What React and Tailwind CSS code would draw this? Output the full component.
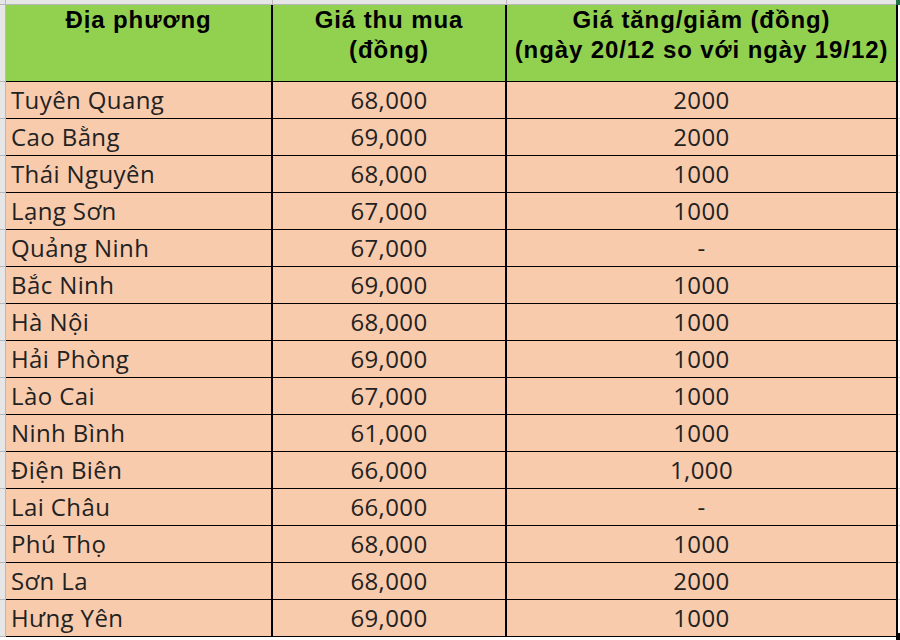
import React from "react";

const rows = [
    ["Tuyên Quang", "68,000", "2000"],
    ["Cao Bằng", "69,000", "2000"],
    ["Thái Nguyên", "68,000", "1000"],
    ["Lạng Sơn", "67,000", "1000"],
    ["Quảng Ninh", "67,000", "-"],
    ["Bắc Ninh", "69,000", "1000"],
    ["Hà Nội", "68,000", "1000"],
    ["Hải Phòng", "69,000", "1000"],
    ["Lào Cai", "67,000", "1000"],
    ["Ninh Bình", "61,000", "1000"],
    ["Điện Biên", "66,000", "1,000"],
    ["Lai Châu", "66,000", "-"],
    ["Phú Thọ", "68,000", "1000"],
    ["Sơn La", "68,000", "2000"],
    ["Hưng Yên", "69,000", "1000"],
];

const cols = "grid grid-cols-[6px_267px_234px_391px_2px]";

const App = () => {
    return (
        <div className="relative w-[900px] h-[640px] bg-white overflow-hidden">
            {/* Top strip (sheet gridlines) */}
            <div className={`${cols} h-[5px]`}>
                <div className="bg-[#e6e6e6] border-r border-b border-[#b8b8b8]" />
                <div className="bg-[#e6e6e6] border-r border-b border-[#b8b8b8]" />
                <div className="bg-[#e6e6e6] border-r border-b border-[#b8b8b8]" />
                <div className="bg-[#e6e6e6] border-b border-[#b8b8b8]" />
                <div className="bg-white" />
            </div>

            {/* Header */}
            <div className={`${cols} h-[77px] text-black font-bold text-[24px] leading-[30px] tracking-[0.9px] text-center font-['Liberation_Sans',Arial,sans-serif]`}>
                <div className="bg-[#e6e6e6] border-r border-b border-[#b8b8b8]" />
                <div className="bg-[#92d050] border-r-2 border-b border-black">Địa phương</div>
                <div className="bg-[#92d050] border-r-2 border-b border-black">
                    Giá thu mua
                    <br />
                    (đồng)
                </div>
                <div className="bg-[#92d050] border-r-2 border-b border-black">
                    Giá tăng/giảm (đồng)
                    <br />
                    (ngày 20/12 so với ngày 19/12)
                </div>
                <div className="border-b border-[#d4d4d4]" />
            </div>

            {/* Body rows */}
            {rows.map(([place, price, change]) => (
                <div
                    key={place}
                    className={`${cols} h-[37px] text-[24px] tracking-[0.4px] text-[#222] font-['Open_Sans','Noto_Sans',sans-serif]`}
                >
                    <div className="bg-[#e6e6e6] border-r border-b border-[#b8b8b8]" />
                    <div className="bg-[#f8cbad] border-r-2 border-b border-black flex items-center pl-[5px]">
                        {place}
                    </div>
                    <div className="bg-[#f8cbad] border-r-2 border-b border-black flex items-center justify-center">
                        {price}
                    </div>
                    <div className="bg-[#f8cbad] border-r-2 border-b border-black flex items-center justify-center">
                        {change}
                    </div>
                    <div className="border-b border-[#d4d4d4]" />
                </div>
            ))}

            {/* Selection corner marks */}
            <div className="absolute top-0 right-0 w-[4px] h-[5px] bg-[#217346]" />
            <div className="absolute bottom-0 right-0 w-[4px] h-[7px] bg-black" />
        </div>
    );
};

export default App;
